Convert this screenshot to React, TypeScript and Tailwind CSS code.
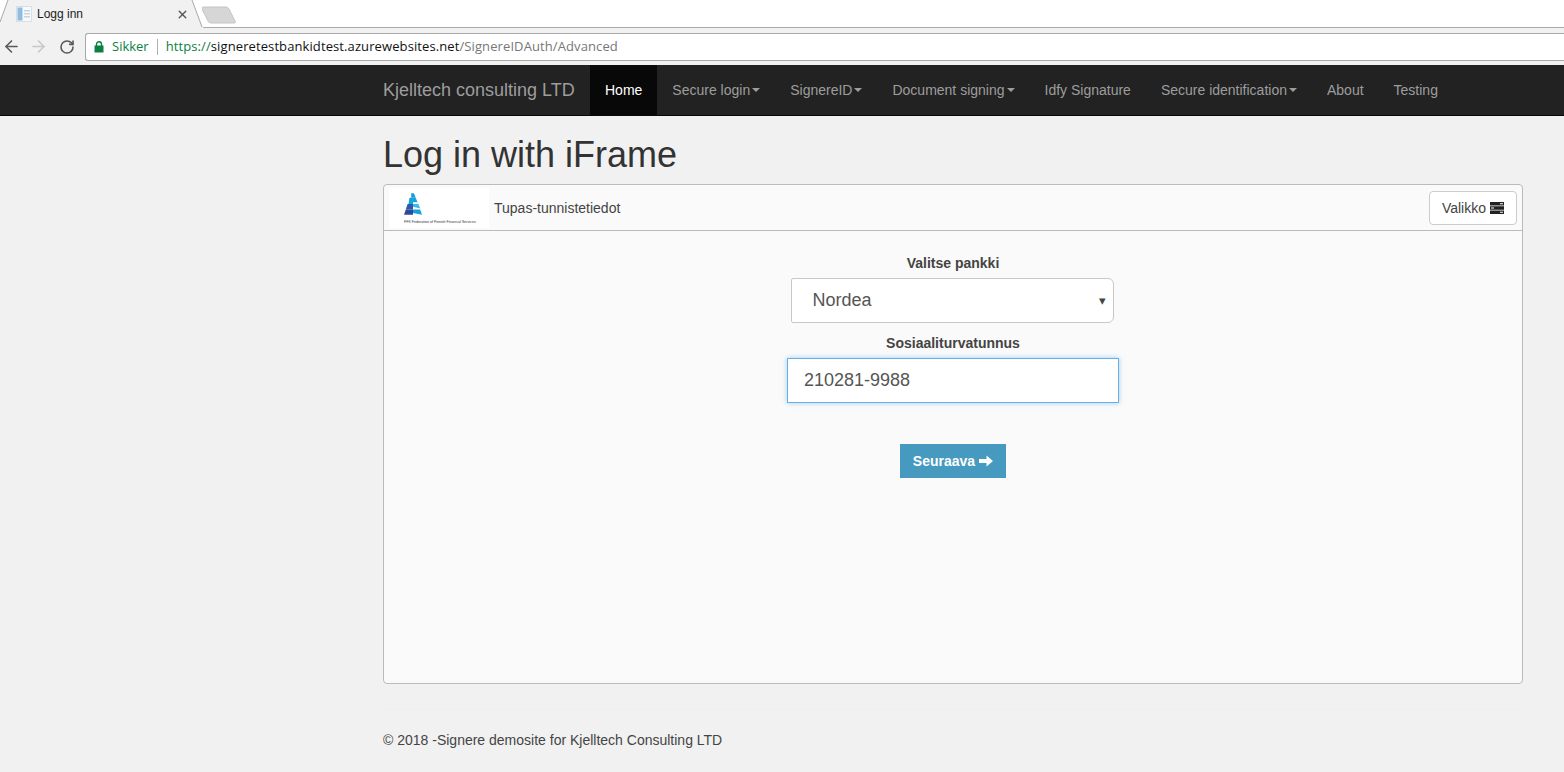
import { ArrowLeft, ArrowRight, RotateCw, X } from "lucide-react";

const navItems = [
  { label: "Secure login", caret: true },
  { label: "SignereID", caret: true },
  { label: "Document signing", caret: true },
  { label: "Idfy Signature", caret: false },
  { label: "Secure identification", caret: true },
  { label: "About", caret: false },
  { label: "Testing", caret: false },
];

const BrowserChrome = () => (
  <div className="font-['Open_Sans','Liberation_Sans',sans-serif]">
    <div className="flex h-[28px] border-b border-[#a9a9a9] bg-white">
      <div className="relative h-[28px] w-[202px] shrink-0">
        <svg className="absolute inset-0" width="204" height="28" viewBox="0 0 204 28">
          <path d="M0 22 L8 0 L192 0 L203 27.5 L204 28 L0 28 Z" fill="#f1f1f1" />
          <path d="M0 22 L8 0 M192 0 L202 27" stroke="#a9a9a9" fill="none" />
        </svg>
        <div className="relative flex h-[28px] items-center pl-[16px] pr-[14px]">
          <svg width="16" height="16" viewBox="0 0 16 16">
            <rect x="0.5" y="0.5" width="15" height="15" fill="#f7f9fb" stroke="#d5dfe8" />
            <rect x="1.5" y="1.5" width="5" height="13" fill="#8fbde2" />
            <rect x="8" y="4" width="6" height="1.5" fill="#c9d3dc" />
            <rect x="8" y="7" width="6" height="1.5" fill="#c9d3dc" />
            <rect x="8" y="10" width="6" height="1.5" fill="#c9d3dc" />
          </svg>
          <span className="ml-[5px] font-['Liberation_Sans',sans-serif] text-[12px] text-[#222]">Logg inn</span>
          <X className="ml-auto mr-[-1px] text-[#555]" size={13} strokeWidth={2.6} />
        </div>
      </div>
      <svg className="mt-[6px]" width="36" height="18" viewBox="0 0 36 18">
        <path d="M1 1 L24 1 Q26 1 27 3 L33 15 Q34 17 32 17 L9 17 Q7 17 6 15 L0 3 Q0 1 1 1 Z" fill="#d6d6d6" stroke="#c4c4c4" />
      </svg>
    </div>
    <div className="flex h-[37px] items-center bg-[#f1f1f1]">
      <div className="flex w-[85px] shrink-0 items-center pl-[2px] text-[#5a5a5a]">
        <ArrowLeft size={19} strokeWidth={2} />
        <ArrowRight className="ml-[8px] text-[#c8c8c8]" size={19} strokeWidth={2} />
        <RotateCw className="ml-[11px]" size={16} strokeWidth={2.4} />
      </div>
      <div className="flex h-[28px] flex-1 items-center rounded-l-[3px] border border-r-0 border-[#a9a9a9] bg-white pl-[8px] text-[13px]">
        <svg width="10" height="12" viewBox="0 0 10 12">
          <path d="M2.5 5V3.2a2.5 2.5 0 0 1 5 0V5" fill="none" stroke="#0b8043" strokeWidth="1.4" />
          <rect x="0.5" y="4.5" width="9" height="7" fill="#0b8043" />
        </svg>
        <span className="ml-[8px] text-[#0b8043]">Sikker</span>
        <span className="mx-[8px] h-[16px] w-px bg-[#b0b0b0]" />
        <span className="tracking-[0.1px] text-[#0b8043]">https://</span>
        <span className="tracking-[0.1px] text-[#111]">signeretestbankidtest.azurewebsites.net</span>
        <span className="tracking-[0.1px] text-[#777]">/SignereIDAuth/Advanced</span>
      </div>
    </div>
  </div>
);

const Navbar = () => (
  <div className="h-[51px] border-b border-[#080808] bg-[#222222] pl-[383px]">
    <div className="flex h-[50px] items-center text-[14px] text-[#9d9d9d]">
      <span className="w-[207px] text-[18px]">Kjelltech consulting LTD</span>
      <span className="flex h-[50px] items-center bg-[#080808] px-[15px] text-white">Home</span>
      {navItems.map((item) => (
        <span className="flex h-[50px] items-center px-[15px]" key={item.label}>
          {item.label}
          {item.caret && (
            <span className="ml-[2px] h-0 w-0 border-x-[4px] border-t-[4px] border-x-transparent border-t-[#9d9d9d]" />
          )}
        </span>
      ))}
    </div>
  </div>
);

const FfkLogo = () => (
  <div className="flex h-[40px] w-[100px] shrink-0 flex-col items-start bg-white pl-[15px] pt-[5px]">
    <svg width="18" height="23" viewBox="0 0 20 25">
      <path d="M8 0 L11 0 L13 5 L8 5 Z" fill="#1d9ad6" />
      <path d="M6 5 L13 5 L15 10 L10 10 L10 12 L5 12 Z" fill="#14a6e0" />
      <path d="M4 12 L10 12 L10 18 L2 18 Z" fill="#2a5aa8" />
      <path d="M10 12 L16 12 L18 17 L10 15 Z" fill="#3fb7e8" />
      <path d="M2 18 L10 18 L10 24 L0 24 Z" fill="#2c4a9a" />
      <path d="M10 18 L18 18 L20 24 L10 22 Z" fill="#17a0dc" />
    </svg>
    <span className="mt-[3px] whitespace-nowrap text-[3.6px] leading-[6px] text-[#333]">
      FFK Federation of Finnish Financial Services
    </span>
  </div>
);

const MenuIcon = () => (
  <svg width="14" height="14" viewBox="0 0 14 14">
    <path d="M0 1h14v3.5H0zM0 5.3h14v3.5H0zM0 9.6h14v3.5H0z" fill="#222" />
    <path d="M10 2.2h3v1h-3zM1 6.5h3v1H1zM10 10.8h3v1h-3z" fill="#fff" />
  </svg>
);

export default function App() {
  return (
    <div className="h-[772px] overflow-hidden bg-[#f1f1f1] font-['Liberation_Sans',Arial,sans-serif] text-[14px] text-[#444]">
      <BrowserChrome />
      <Navbar />
      <div className="ml-[383px] w-[1140px]">
        <h1 className="mt-[19px] text-[36px] leading-[40px] text-[#333]">Log in with iFrame</h1>
        <div className="mt-[9px] h-[500px] rounded-[4px] border border-[#bbbbbb] bg-[#fafafa]">
          <div className="flex h-[46px] items-center border-b border-[#bbbbbb] pl-[5px] pr-[5px]">
            <FfkLogo />
            <span className="ml-[5px] mt-[2px]">Tupas-tunnistetiedot</span>
            <button className="ml-auto flex h-[34px] items-center gap-[4px] rounded-[4px] border border-[#cccccc] bg-white px-[12px] text-[#444]">
              <span className="mt-[2px]">Valikko</span> <MenuIcon />
            </button>
          </div>
          <div className="flex flex-col items-center pt-[22px]">
            <label className="font-bold leading-[20px]">Valitse pankki</label>
            <div className="mr-[2px] mt-[5px] flex h-[45px] w-[323px] items-center justify-between rounded-r-[6px] rounded-l-[2px] border border-[#c8c8c8] bg-white pl-[21px] pr-[7px] text-[18px] text-[#555]">
              Nordea
              <span className="text-[13px] text-[#444]">▾</span>
            </div>
            <label className="mt-[10px] font-bold leading-[20px]">Sosiaaliturvatunnus</label>
            <input
              className="mt-[5px] h-[45px] w-[332px] border border-[#66afe9] bg-white px-[16px] text-[18px] text-[#555] shadow-[0_0_5px_rgba(102,175,233,0.6)] outline-none"
              readOnly
              value="210281-9988"
            />
            <button className="mt-[41px] flex h-[34px] w-[106px] items-center justify-center gap-[4px] bg-[#4699bf] font-bold text-white">
              Seuraava
              <svg width="14" height="12" viewBox="0 0 14 12">
                <path d="M0 4h7.5V0.5L14 6l-6.5 5.5V8H0z" fill="#fff" />
              </svg>
            </button>
          </div>
        </div>
        <div className="mt-[25px] border-t border-[#eeeeee] pt-[20px]">
          <p className="leading-[20px]">© 2018 -Signere demosite for Kjelltech Consulting LTD</p>
        </div>
      </div>
    </div>
  );
}
